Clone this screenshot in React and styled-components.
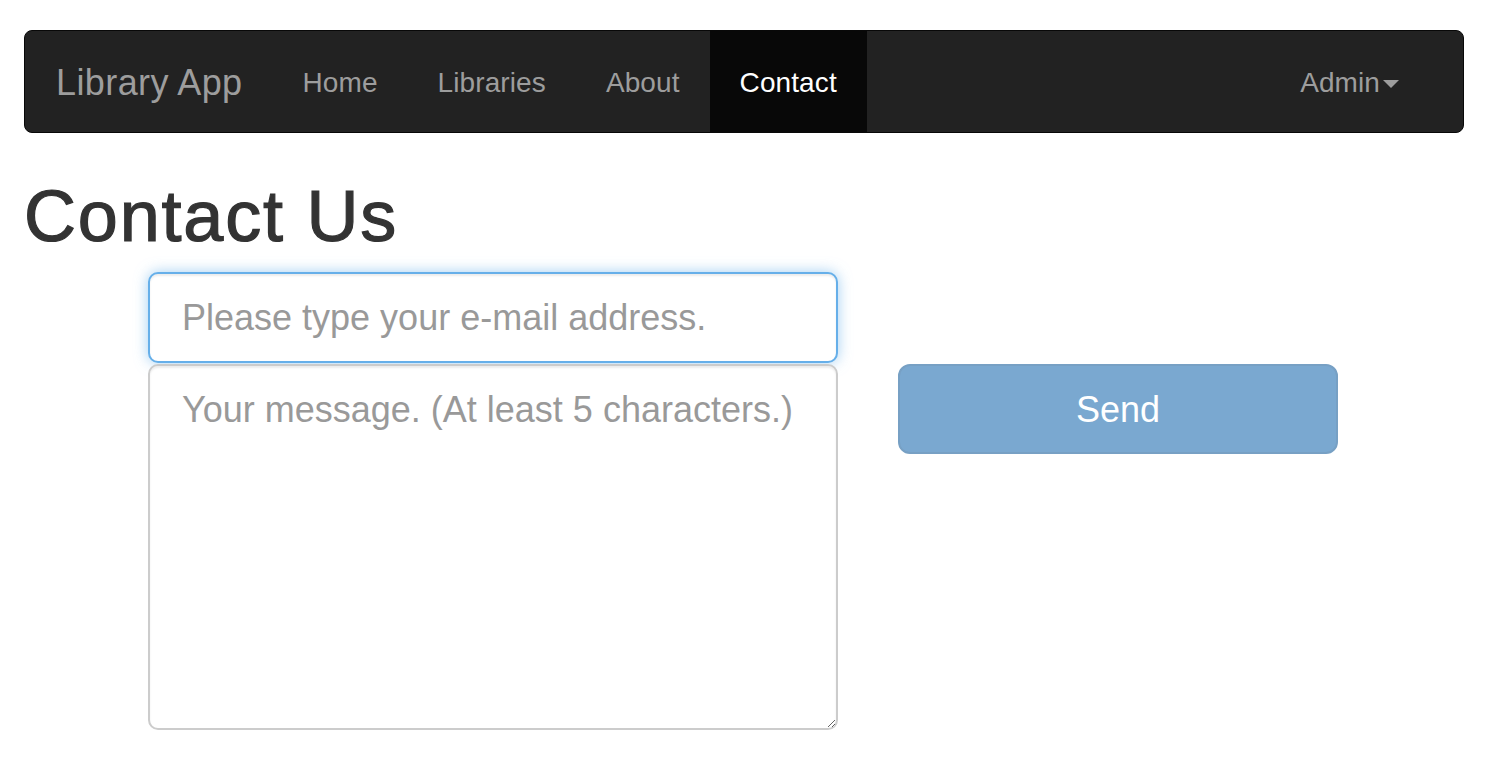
import React from "react";
import styled, { createGlobalStyle } from "styled-components";

const GlobalStyle = createGlobalStyle`
  html, body {
    margin: 0;
    padding: 0;
    background: #ffffff;
  }
  body {
    font-family: "Liberation Sans", Arial, sans-serif;
    color: #333333;
  }
  * {
    box-sizing: border-box;
  }
`;

const Page = styled.div`
  padding: 30px 28px 0 24px;
`;

const Navbar = styled.nav`
  display: flex;
  align-items: stretch;
  height: 103px;
  background: #222222;
  border: 1px solid #080808;
  border-radius: 8px;
  padding-right: 34px;
`;

const Brand = styled.a`
  display: flex;
  align-items: center;
  padding: 2px 30px 0 31px;
  font-size: 36px;
  letter-spacing: 0.4px;
  color: #9d9d9d;
  text-decoration: none;
`;

const NavList = styled.ul`
  display: flex;
  list-style: none;
  margin: 0;
  padding: 0;
  margin-left: ${(p) => (p.$right ? "auto" : "0")};
`;

const NavLink = styled.a`
  display: flex;
  align-items: center;
  height: 100%;
  padding: 2px 30px 0;
  font-size: 28px;
  letter-spacing: 0.1px;
  color: ${(p) => (p.$active ? "#ffffff" : "#9d9d9d")};
  background: ${(p) => (p.$active ? "#080808" : "transparent")};
  text-decoration: none;
`;

const Caret = styled.span`
  display: inline-block;
  width: 0;
  height: 0;
  margin-left: 3px;
  margin-top: 2px;
  border-top: 8px solid #9d9d9d;
  border-left: 8px solid transparent;
  border-right: 8px solid transparent;
`;

const Title = styled.h1`
  margin: 44px 0 16px;
  font-size: 72px;
  font-weight: 400;
  line-height: 1.1;
  letter-spacing: 1.8px;
  color: #333333;
  -webkit-text-stroke: 1.2px #333333;
`;

const FormRow = styled.div`
  display: flex;
  align-items: flex-start;
  gap: 60px;
  padding-left: 124px;
`;

const Fields = styled.div`
  display: flex;
  flex-direction: column;
  gap: 1px;
  width: 690px;
`;

const EmailInput = styled.input`
  height: 91px;
  width: 100%;
  padding: 0 32px;
  font-family: "Liberation Sans", Arial, sans-serif;
  font-size: 36px;
  color: #555555;
  border: 2px solid #66afe9;
  border-radius: 10px;
  outline: none;
  box-shadow: inset 0 2px 2px rgba(0, 0, 0, 0.075),
    0 0 14px rgba(102, 175, 233, 0.6);
  &::placeholder {
    color: #999999;
  }
`;

const MessageArea = styled.textarea`
  height: 366px;
  width: 100%;
  padding: 20px 32px;
  font-family: "Liberation Sans", Arial, sans-serif;
  font-size: 36px;
  line-height: 1.333;
  color: #555555;
  border: 2px solid #cccccc;
  border-radius: 10px;
  outline: none;
  resize: vertical;
  box-shadow: inset 0 2px 2px rgba(0, 0, 0, 0.075);
  &::placeholder {
    color: #999999;
  }
`;

const SendButton = styled.button`
  margin-top: 92px;
  width: 440px;
  height: 90px;
  padding-top: 2px;
  font-family: "Liberation Sans", Arial, sans-serif;
  font-size: 36px;
  color: #ffffff;
  background: #7aa8d0;
  border: 2px solid #77a0c4;
  border-radius: 12px;
  cursor: not-allowed;
`;

export default function App() {
  return (
    <>
      <GlobalStyle />
      <Page>
        <Navbar>
          <Brand href="#">Library App</Brand>
          <NavList>
            <li><NavLink href="#">Home</NavLink></li>
            <li><NavLink href="#">Libraries</NavLink></li>
            <li><NavLink href="#">About</NavLink></li>
            <li><NavLink href="#" $active>Contact</NavLink></li>
          </NavList>
          <NavList $right>
            <li>
              <NavLink href="#">
                Admin
                <Caret />
              </NavLink>
            </li>
          </NavList>
        </Navbar>
        <Title>Contact Us</Title>
        <FormRow>
          <Fields>
            <EmailInput type="email" placeholder="Please type your e-mail address." autoFocus />
            <MessageArea placeholder="Your message. (At least 5 characters.)" />
          </Fields>
          <SendButton disabled>Send</SendButton>
        </FormRow>
      </Page>
    </>
  );
}
